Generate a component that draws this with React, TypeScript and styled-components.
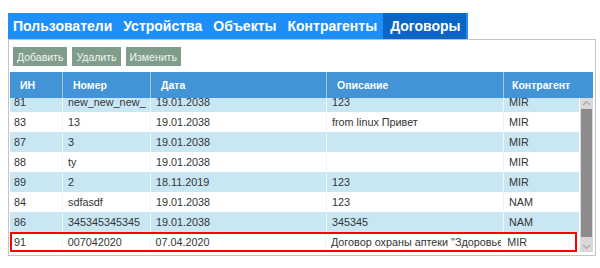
import React, { useLayoutEffect, useRef } from "react";
import styled, { createGlobalStyle } from "styled-components";

const Global = createGlobalStyle`
  html, body { margin: 0; padding: 0; background: #fff; }
  body { font-family: "Liberation Sans", Arial, sans-serif; }
`;

const Page = styled.div`
  padding: 13px 0 0 8px;
  width: 588px;
`;

const TabBar = styled.div`
  display: flex;
  width: 460px;
  height: 26px;
  background: #1e8ff8;
`;

const Tab = styled.div<{ $active?: boolean }>`
  display: flex;
  align-items: center;
  font-size: 14px;
  font-weight: bold;
  color: #fff;
  background: ${(p) => (p.$active ? "#0a66c6" : "transparent")};
  padding-left: ${(p) => (p.$active ? "7px" : "5px")};
  padding-right: ${(p) => (p.$active ? "5px" : "6px")};
`;

const Panel = styled.div`
  border: 1px solid #c4c4c4;
  padding: 7px 2px 3px 1px;
  display: flex;
  flex-direction: column;
`;

const Toolbar = styled.div`
  display: flex;
  gap: 5px;
  padding-left: 3px;
  margin-bottom: 6px;
`;

const Button = styled.div`
  height: 19px;
  padding: 0 4px;
  display: flex;
  align-items: center;
  background: #7f9d8a;
  color: #f4f4f4;
  font-size: 10.5px;
`;

const cols = [52, 88, 176, 177, 76];

const HeaderRow = styled.div`
  display: flex;
  height: 26px;
  background: #4394d6;
  width: 583px;
`;

const HeadCell = styled.div<{ $w: number; $pl?: number }>`
  width: ${(p) => p.$w}px;
  box-sizing: border-box;
  padding-left: ${(p) => p.$pl ?? 10}px;
  display: flex;
  align-items: center;
  color: #fff;
  font-weight: bold;
  font-size: 10.5px;
  border-left: 1px solid #9ec8ea;
  &:first-child { border-left: none; }
`;

const BodyWrap = styled.div`
  display: flex;
  height: 154px;
`;

const Rows = styled.div`
  width: 569px;
  overflow: hidden;
`;

const Row = styled.div<{ $alt: boolean; $marked?: boolean }>`
  display: flex;
  height: 20px;
  background: ${(p) => (p.$alt ? "#c9e7f3" : "#fff")};
  ${(p) => (p.$marked ? "outline: 2px solid #f00; outline-offset: -2px; width: 567px;" : "")}
`;

const Cell = styled.div<{ $w: number }>`
  width: ${(p) => p.$w}px;
  box-sizing: border-box;
  padding-left: 5px;
  display: flex;
  align-items: center;
  font-size: 10.8px;
  color: #333;
  white-space: nowrap;
  overflow: hidden;
  border-left: 1px solid #eef5f9;
  &:first-child { border-left: none; padding-left: 4px; }
`;

const Scrollbar = styled.div`
  width: 13px;
  margin-left: 1px;
  background: #d9d9d9;
  display: flex;
  flex-direction: column;
  align-items: center;
`;

const Arrow = styled.svg`
  flex: none;
  margin: 2px 0;
`;

const Thumb = styled.div`
  width: 11px;
  height: 128px;
  background: #8c8c8c;
  margin-top: 1px;
`;

const Spacer = styled.div`
  flex: 1;
`;

const data: [string, string, string, string, string][] = [
  ["81", "new_new_new_", "19.01.2038", "123", "MIR"],
  ["83", "13", "19.01.2038", "from linux Привет", "MIR"],
  ["87", "3", "19.01.2038", "", "MIR"],
  ["88", "ty", "19.01.2038", "", "MIR"],
  ["89", "2", "18.11.2019", "123", "MIR"],
  ["84", "sdfasdf", "19.01.2038", "123", "NAM"],
  ["86", "345345345345", "19.01.2038", "345345", "NAM"],
  ["91", "007042020", "07.04.2020", "Договор охраны аптеки \"Здоровье\"", "MIR"],
];

export default function App() {
  const ref = useRef<HTMLDivElement>(null);
  useLayoutEffect(() => {
    if (ref.current) ref.current.scrollTop = ref.current.scrollHeight;
  }, []);
  const tabs = ["Пользователи", "Устройства", "Объекты", "Контрагенты", "Договоры"];
  const heads = ["ИН", "Номер", "Дата", "Описание", "Контрагент"];
  return (
    <>
      <Global />
      <Page>
        <TabBar>
          {tabs.map((t, i) => (
            <Tab key={t} $active={i === tabs.length - 1}>
              {t}
            </Tab>
          ))}
        </TabBar>
        <Panel>
          <Toolbar>
            <Button>Добавить</Button>
            <Button>Удалить</Button>
            <Button>Изменить</Button>
          </Toolbar>
          <HeaderRow>
            {heads.map((h, i) => (
              <HeadCell key={h} $w={i === 4 ? cols[i] + 14 : cols[i]} $pl={i === 4 ? 8 : 10}>
                {h}
              </HeadCell>
            ))}
          </HeaderRow>
          <BodyWrap>
            <Rows ref={ref}>
              {data.map((r, i) => (
                <Row key={r[0]} $alt={i % 2 === 0} $marked={i === data.length - 1}>
                  {r.map((c, j) => (
                    <Cell key={j} $w={cols[j]}>
                      {c}
                    </Cell>
                  ))}
                </Row>
              ))}
            </Rows>
            <Scrollbar>
              <Arrow width="9" height="6" viewBox="0 0 9 6">
                <path d="M1 5 L4.5 1.5 L8 5" fill="none" stroke="#a8a8a8" strokeWidth="1.2" />
              </Arrow>
              <Thumb />
              <Spacer />
              <Arrow width="9" height="6" viewBox="0 0 9 6">
                <path d="M1 1 L4.5 4.5 L8 1" fill="none" stroke="#a8a8a8" strokeWidth="1.2" />
              </Arrow>
            </Scrollbar>
          </BodyWrap>
        </Panel>
      </Page>
    </>
  );
}
